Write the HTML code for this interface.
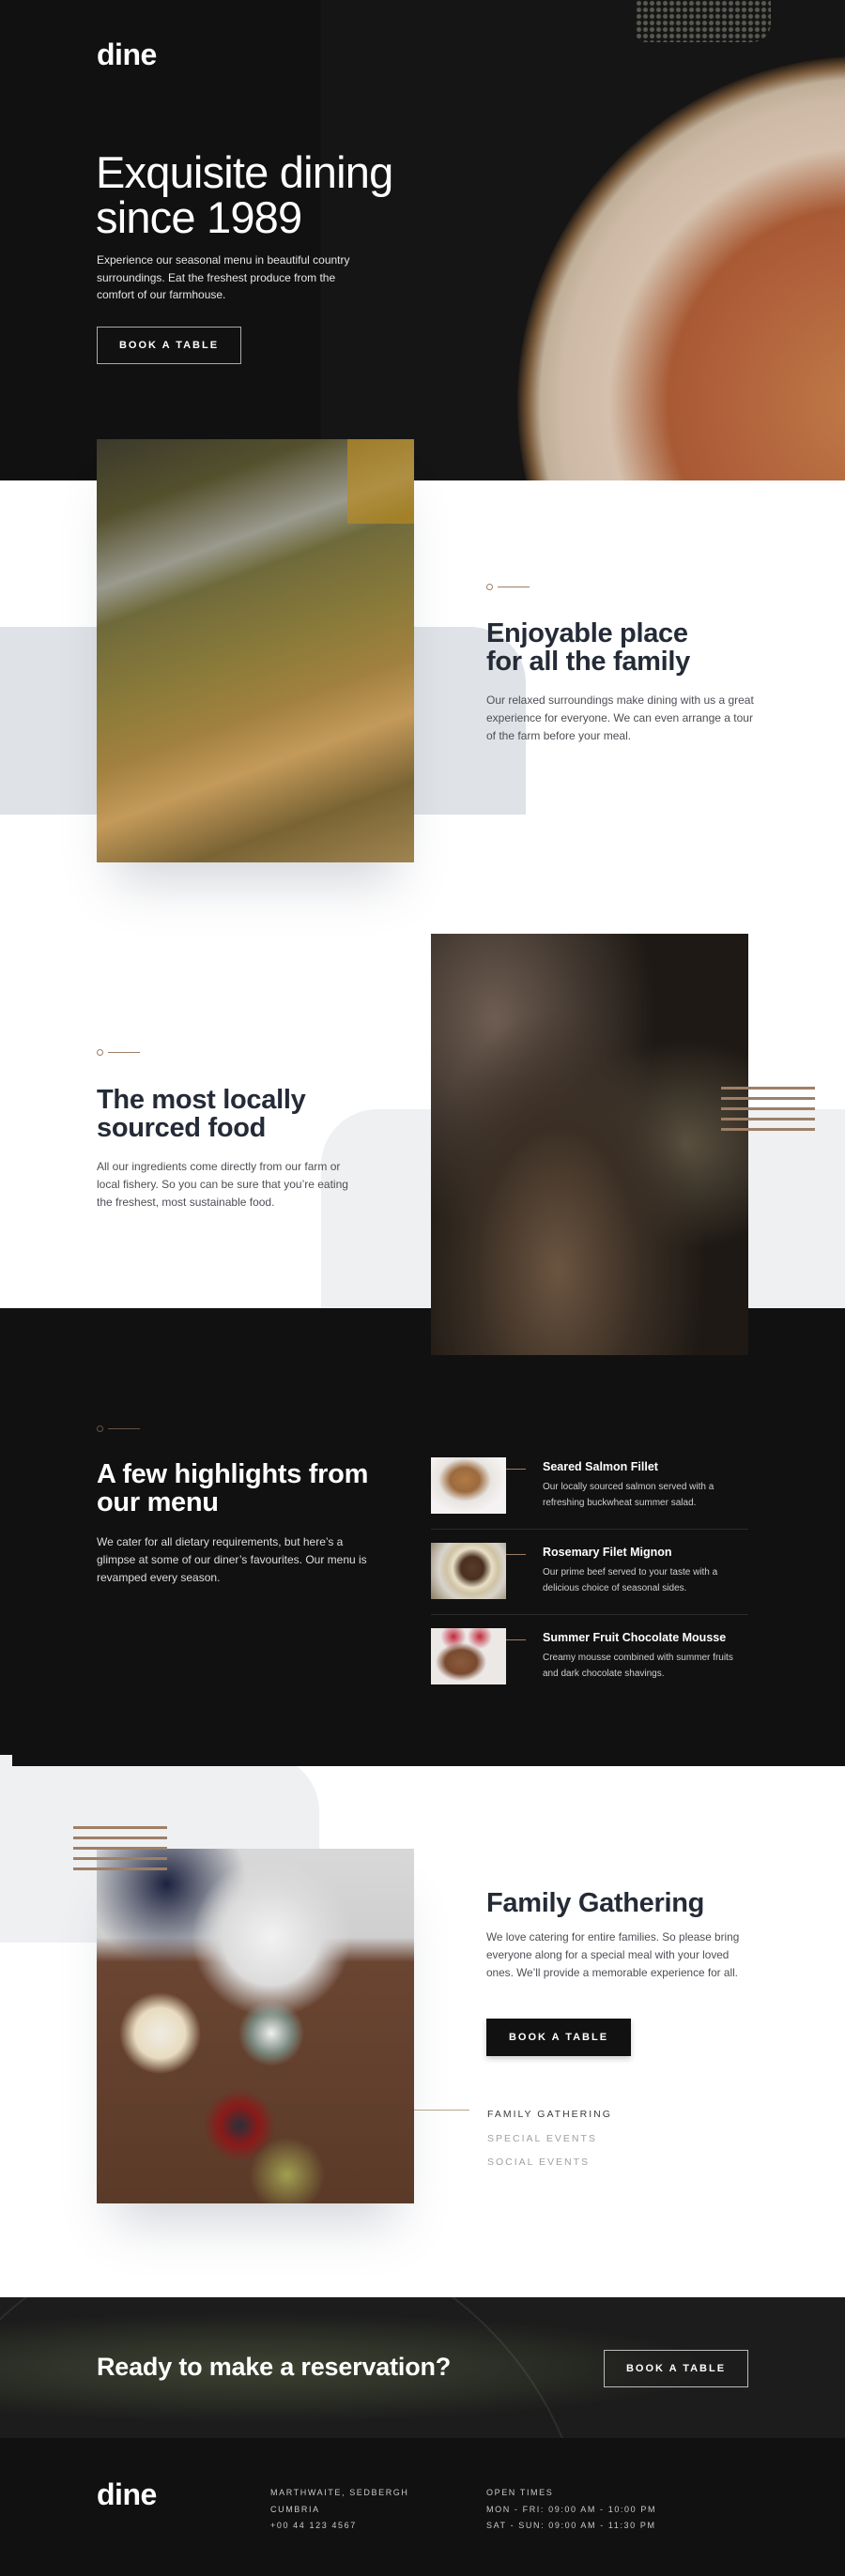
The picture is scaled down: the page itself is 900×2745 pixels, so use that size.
<!DOCTYPE html>
<html style="height:2745px;overflow:hidden"><head><meta charset="utf-8"><style>
*{margin:0;padding:0;box-sizing:border-box}
body{width:900px;height:2745px;position:relative;background:#fff;font-family:"Liberation Sans",sans-serif;overflow:hidden}
.a{position:absolute}
.dash{position:absolute;width:46px;height:8px}
.dash:before{content:"";position:absolute;left:0;top:1px;width:5px;height:5px;border:1px solid #9e7f66;border-radius:50%}
.dash:after{content:"";position:absolute;left:12px;top:4px;width:34px;height:1px;background:#9e7f66}
h2{position:absolute;font-size:29px;line-height:30px;font-weight:bold;color:#242b37;letter-spacing:-0.3px}
p.t{position:absolute;font-size:12px;line-height:19px;color:#4d4f55}
.stripes{position:absolute;width:100px;height:48px;background:repeating-linear-gradient(#9e7f66 0 3px,transparent 3px 11px)}
.btn{position:absolute;font-size:11px;letter-spacing:2px;font-weight:bold;text-align:center;line-height:40px;height:40px;width:154px}
.mi{position:absolute;left:459px;width:338px;height:62px}
.mi .im{position:absolute;left:0;top:0;width:80px;height:60px}
.mi .ln{position:absolute;left:80px;top:12px;width:21px;height:1px;background:#9e7f66}
.mi b{position:absolute;left:119px;top:3px;font-size:12.5px;color:#fff}
.mi span{position:absolute;left:119px;top:23px;width:220px;font-size:10px;line-height:17px;color:#cfcfcf}
.hr{position:absolute;left:459px;width:338px;height:1px;background:#2b2b2b}
.ft{position:absolute;font-size:9px;letter-spacing:1.6px;color:#c9c9c9;line-height:17.5px}
</style></head><body>
<!-- hero -->
<div class="a" style="left:0;top:0;width:900px;height:512px;background:#151515;overflow:hidden">
<div class="a" style="left:0;top:0;width:342px;height:512px;background:#111"></div>
<div class="a" style="left:677px;top:0;width:144px;height:45px;background:radial-gradient(circle,#6a6a62 40%,transparent 60%) 0 0/7px 7px;opacity:.8;border-radius:0 0 20px 10px"></div>
<div class="a" style="left:551px;top:60px;width:740px;height:740px;border-radius:50%;background:radial-gradient(circle at 50% 50%,#c07a48 0,#b0603a 30%,#a85a34 40%,#d4c0ac 52%,#cdb9a5 62%,#bfae98 66%,#7a5a3a 68.5%,#1a1512 71%)"></div>
</div>
<div class="a" style="left:103px;top:40px;font-size:32px;font-weight:bold;color:#fff;letter-spacing:-0.5px">dine</div>
<div class="a" style="left:102px;top:160px;font-size:47px;line-height:48px;color:#fff;font-weight:normal;letter-spacing:-0.8px">Exquisite dining<br>since 1989</div>
<div class="a" style="left:103px;top:268px;font-size:12px;line-height:18.5px;color:#e6e6e6;width:280px">Experience our seasonal menu in beautiful country surroundings. Eat the freshest produce from the comfort of our farmhouse.</div>
<div class="btn" style="left:103px;top:348px;border:1px solid #aaa;color:#fff;line-height:38px">BOOK A TABLE</div>
<!-- section 1 -->
<div class="a" style="left:0;top:668px;width:560px;height:200px;background:#dfe2e6;border-radius:0 60px 0 0"></div>
<div class="a" style="left:103px;top:468px;width:338px;height:451px;background:linear-gradient(160deg,#3b3a2c 0,#54502d 15%,#9a9a8e 28%,#6f6a3b 35%,#8a7a3a 50%,#a2813f 62%,#c49a5a 72%,#7a6434 85%,#9f8450 100%);box-shadow:0 40px 50px -20px rgba(80,90,110,.25)"></div>
<div class="a" style="left:370px;top:468px;width:71px;height:90px;background:#b88a22;opacity:.7"></div>
<div class="dash" style="left:518px;top:621px"></div>
<h2 style="left:518px;top:660px">Enjoyable place<br>for all the family</h2>
<p class="t" style="left:518px;top:737px;width:290px">Our relaxed surroundings make dining with us a great experience for everyone. We can even arrange a tour of the farm before your meal.</p>
<!-- section 2 -->
<div class="a" style="left:342px;top:1182px;width:558px;height:212px;background:#eff0f2;border-radius:60px 0 0 0"></div>
<div class="dash" style="left:103px;top:1117px"></div>
<h2 style="left:103px;top:1157px">The most locally<br>sourced food</h2>
<p class="t" style="left:103px;top:1234px;width:275px">All our ingredients come directly from our farm or local fishery. So you can be sure that you’re eating the freshest, most sustainable food.</p>
<div class="a" style="left:0;top:1394px;width:900px;height:488px;background:#111"></div>
<div class="a" style="left:459px;top:995px;width:338px;height:449px;background:radial-gradient(ellipse at 40% 80%,#6b5540 0,#3b2f25 30%,transparent 55%),radial-gradient(ellipse at 20% 20%,#6e5d52 0,transparent 45%),radial-gradient(ellipse at 80% 50%,#5a5040 0,transparent 35%),#1e1914"></div>
<div class="stripes" style="left:768px;top:1158px"></div>
<!-- menu -->
<div class="dash" style="left:103px;top:1518px;opacity:.6"></div>
<h2 style="left:103px;top:1556px;color:#fff">A few highlights from<br>our menu</h2>
<div class="a" style="left:103px;top:1634px;width:295px;font-size:12px;line-height:19px;color:#ddd">We cater for all dietary requirements, but here’s a glimpse at some of our diner’s favourites. Our menu is revamped every season.</div>
<div class="mi" style="top:1553px"><div class="im" style="background:radial-gradient(ellipse at 45% 40%,#b27a45 0,#9b6a3e 25%,#e8e4e0 45%,#f4f2f2 70%)"></div><div class="ln"></div><b>Seared Salmon Fillet</b><span>Our locally sourced salmon served with a refreshing buckwheat summer salad.</span></div>
<div class="hr" style="top:1629px"></div>
<div class="mi" style="top:1644px"><div class="im" style="background:radial-gradient(circle at 55% 45%,#5a3a28 0,#4a3020 22%,#e8dfc8 38%,#cfc3a4 50%,#d8d4cc 65%,#8a7a60 100%)"></div><div class="ln"></div><b>Rosemary Filet Mignon</b><span>Our prime beef served to your taste with a delicious choice of seasonal sides.</span></div>
<div class="hr" style="top:1720px"></div>
<div class="mi" style="top:1735px"><div class="im" style="background:radial-gradient(ellipse at 40% 60%,#8a5a3c 0,#7a4a30 25%,transparent 40%),radial-gradient(circle at 30% 15%,#c0283a 0,transparent 18%),radial-gradient(circle at 65% 15%,#c0283a 0,transparent 18%),#ece8e6"></div><div class="ln"></div><b>Summer Fruit Chocolate Mousse</b><span>Creamy mousse combined with summer fruits and dark chocolate shavings.</span></div>
<!-- family -->
<div class="a" style="left:0;top:1870px;width:340px;height:200px;background:#eff0f2;border-radius:0 60px 0 0"></div>
<div class="a" style="left:13px;top:1870px;width:887px;height:12px;background:#111"></div>
<div class="a" style="left:103px;top:1970px;width:338px;height:378px;background:radial-gradient(circle at 55% 25%,#f2f2f2 0,#dcdcdc 15%,transparent 25%),radial-gradient(circle at 22% 10%,#1c2340 0,transparent 20%),radial-gradient(circle at 20% 52%,#f0ece4 0,#e8dcc0 8%,transparent 13%),radial-gradient(circle at 55% 52%,#f0f0f0 0,#7a8a80 8%,transparent 13%),radial-gradient(circle at 45% 78%,#2a3038 0,#8a1a1a 6%,transparent 11%),radial-gradient(circle at 60% 92%,#a0a050 0,transparent 10%),linear-gradient(#d8d8d8 0,#cfcfcf 25%,#6a4532 32%,#5a3a28 100%);box-shadow:0 40px 50px -20px rgba(80,90,110,.25)"></div>
<div class="stripes" style="left:78px;top:1946px"></div>
<h2 style="left:518px;top:2013px">Family Gathering</h2>
<p class="t" style="left:518px;top:2055px;width:290px;font-size:11.8px">We love catering for entire families. So please bring everyone along for a special meal with your loved ones. We’ll provide a memorable experience for all.</p>
<div class="btn" style="left:518px;top:2151px;background:#111;color:#fff;box-shadow:0 3px 6px rgba(0,0,0,.2)">BOOK A TABLE</div>
<div class="a" style="left:441px;top:2248px;width:59px;height:1px;background:#b7a48f"></div>
<div class="a" style="left:519px;top:2241px;font-size:10.5px;letter-spacing:2px;line-height:25.5px;color:#3c3c3c">FAMILY GATHERING<br><span style="color:#a0a0a0">SPECIAL EVENTS<br>SOCIAL EVENTS</span></div>
<!-- cta -->
<div class="a" style="left:0;top:2448px;width:900px;height:150px;background:radial-gradient(ellipse at 30% 50%,#3d4232 0,#2c2f26 30%,#1c1c1c 55%),#151515;overflow:hidden">
<div class="a" style="left:-120px;top:-78px;width:750px;height:750px;border-radius:50%;border:2px solid rgba(255,255,255,.08)"></div>
</div>
<div class="a" style="left:103px;top:2507px;font-size:27px;font-weight:bold;color:#fff;letter-spacing:-0.2px">Ready to make a reservation?</div>
<div class="btn" style="left:643px;top:2504px;border:1px solid #bbb;color:#fff;line-height:38px">BOOK A TABLE</div>
<!-- footer -->
<div class="a" style="left:0;top:2598px;width:900px;height:147px;background:#111"></div>
<div class="a" style="left:103px;top:2640px;font-size:32px;font-weight:bold;color:#fff;letter-spacing:-0.5px">dine</div>
<div class="ft" style="left:288px;top:2648px">MARTHWAITE, SEDBERGH<br>CUMBRIA<br>+00 44 123 4567</div>
<div class="ft" style="left:518px;top:2648px">OPEN TIMES<br>MON - FRI: 09:00 AM - 10:00 PM<br>SAT - SUN: 09:00 AM - 11:30 PM</div>
</body></html>
